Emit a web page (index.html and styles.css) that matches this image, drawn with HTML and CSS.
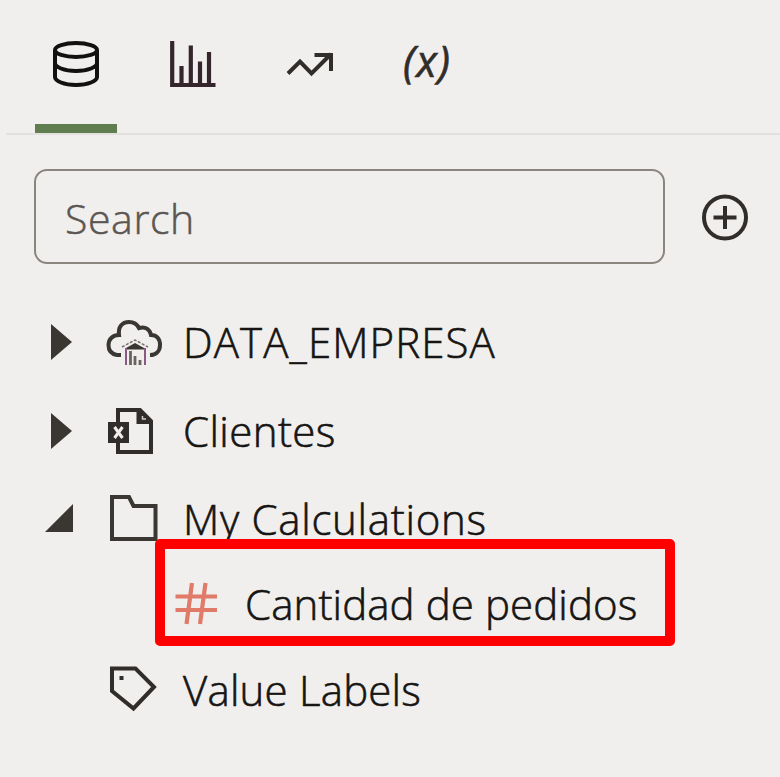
FILE: index.html
```html
<!DOCTYPE html>
<html lang="en">
<head>
<meta charset="utf-8">
<title>Data panel</title>
<link rel="stylesheet" href="styles.css">
</head>
<body>
<nav class="tabs">
  <button class="tab active" aria-label="Data"><svg class="icon" viewBox="0 0 48 48"><g fill="none" stroke="#111" stroke-width="4"><ellipse cx="24" cy="10" rx="21" ry="7"/><path d="M3 10V37C3 41 12 45 24 45S45 41 45 37V10M3 23C3 27 12 31 24 31S45 27 45 23"/></g></svg></button>
  <button class="tab" aria-label="Visualizations"><svg class="icon" viewBox="0 0 48 48"><path d="M3.2 1V45H46.5M12.5 26V44M21.8 5.500V44M31 21.500V44M40 12V44" fill="none" stroke="#35262e" stroke-width="4.2"/></svg></button>
  <button class="tab" aria-label="Analytics"><svg class="icon" viewBox="0 0 48 48"><path d="M2 33.500 14 21.500 25.500 33.500 45 14M28.500 15H45V31" fill="none" stroke="#312d2a" stroke-width="4"/></svg></button>
  <button class="tab parameter" aria-label="Parameters">(x)</button>
</nav>
<main>
  <div class="toolbar">
    <input class="search" type="text" placeholder="Search">
    <button class="add" aria-label="Add"><svg class="icon" viewBox="0 0 48 48"><g fill="none" stroke="#312d2a" stroke-width="4"><circle cx="24" cy="24.500" r="21"/><path d="M12.500 24.500H35.500M24 13V36"/></g></svg></button>
  </div>
  <ul class="tree">
    <li class="row first">
      <svg class="arrow" viewBox="0 0 30 40"><path d="M6 2 27 20 6 38Z"/></svg>
      <svg class="item-icon" viewBox="0 0 60 50"><path d="M17 38H13C7 37 4.500 33 4.500 28 4.500 22 9 18 15 18 14 10 18 5 25 5 29 5 33 7 35 11 42 9 46 13 47 18 53 18 56 22 56 28S52 38 46 38" fill="none" stroke="#3a3631" stroke-width="4"/><path d="M18 30 31 23 44 30" fill="none" stroke="#77716c" stroke-width="1.500" stroke-dasharray="3 1.500"/><path d="M22 31 31 26 40 31V32.500H22Z" fill="#3a3631"/><path d="M22 31V48M41 31V48" fill="none" stroke="#8a5a84" stroke-width="2"/><path d="M26.500 34V48M31 39V48M36 43V48" fill="none" stroke="#6a6460" stroke-width="2.800"/></svg>
      <span class="label data">DATA_EMPRESA</span>
    </li>
    <li class="row second">
      <svg class="arrow" viewBox="0 0 30 40"><path d="M6 2 27 20 6 38Z"/></svg>
      <svg class="item-icon" viewBox="0 0 60 50"><path d="M14 17V4H36L47 15V46H14V36M34.500 4V16H47" fill="none" stroke="#312d2a" stroke-width="4"/><path d="M35 5 46 16H35Z" fill="#312d2a"/><path d="M38.500 10V13H42" fill="none" stroke="#d0cecb" stroke-width="1.500"/><path d="M4 16H25V37H4Z" fill="#312d2a"/><path d="M10.500 21 18.500 32M18.500 21 10.500 32" stroke="#f1efed" stroke-width="3"/></svg>
      <span class="label clients">Clientes</span>
    </li>
    <li class="row third">
      <svg class="arrow" viewBox="0 0 30 40"><path d="M0 33H28V5Z"/></svg>
      <svg class="item-icon" viewBox="0 0 60 50"><path d="M8 3H25L29.500 12H51.500V45H8Z" fill="none" stroke="#3a3631" stroke-width="4"/></svg>
      <span class="label calculations">My Calculations</span>
    </li>
    <li class="row child">
      <svg class="hash" viewBox="0 0 44 44"><path d="M18 1 12.500 42M31.500 1 26 42M1.500 14.500H43M1.500 28H43" fill="none" stroke="#df7b68" stroke-width="4.2"/></svg>
      <span class="label orders">Cantidad de pedidos</span>
      <span class="highlight"></span>
    </li>
    <li class="row last">
      <span class="arrow"></span>
      <svg class="item-icon" viewBox="0 0 60 50"><path d="M8 3.500H31.500L50 22 29.500 43.500 8 26Z" fill="none" stroke="#312d2a" stroke-width="4"/><path d="M15.500 11H19.500V15H15.500Z" fill="#312d2a"/></svg>
      <span class="label values">Value Labels</span>
    </li>
  </ul>
</main>
</body>
</html>
```
FILE: styles.css
```css
* { box-sizing: border-box; }
body {
  margin: 0;
  height: 777px;
  overflow: hidden;
  background: #f1efed;
  color: #161513;
  font-family: "Open Sans", "Noto Sans", sans-serif;
}
button { padding: 0; border: 0; background: none; color: inherit; font: inherit; }
svg { display: block; flex: none; }
.tabs {
  display: flex;
  gap: 35px;
  height: 135px;
  margin-left: 6px;
  padding-left: 29px;
  border-bottom: 2px solid #e3e1df;
}
.tab {
  width: 82px;
  height: 133px;
  display: flex;
  justify-content: center;
  align-items: flex-start;
  padding-top: 40px;
}
.active { border-bottom: 9px solid #5f7d4f; }
.icon { width: 48px; height: 48px; }
.parameter {
  padding-top: 32px;
  font-size: 43px;
  line-height: 58px;
  font-style: italic;
  letter-spacing: 1px;
  color: #312d2a;
  -webkit-text-stroke: 0.6px #312d2a;
}
.toolbar { display: flex; align-items: center; padding: 34px 31px 0 34px; }
.search {
  width: 631px;
  height: 95px;
  border: 2px solid #8b8580;
  border-radius: 13px;
  padding: 2px 29px 0 29px;
  background: transparent;
  outline: none;
  font: 300 41px "Open Sans", "Noto Sans", sans-serif;
  letter-spacing: 0.6px;
}
.search::placeholder { color: #5b5652; opacity: 1; -webkit-text-stroke: 0.5px #5b5652; }
.add { margin-left: 36px; }
.tree { list-style: none; margin: 0; padding: 33px 0 0 45px; }
.row { display: flex; align-items: center; height: 88px; }
.first { height: 89px; }
.second { height: 89px; }
.last { height: 92px; }
.arrow { width: 30px; height: 40px; fill: #3a3631; flex: none; }
.item-icon { width: 60px; height: 50px; margin-left: 29px; }
.label {
  margin-left: 19px;
  font-size: 42px;
  font-weight: 300;
  line-height: 58px;
  white-space: nowrap;
  -webkit-text-stroke: 0.6px #161513;
}
.data { letter-spacing: 1.1px; }
.clients { letter-spacing: 0.4px; }
.calculations { letter-spacing: 0.7px; }
.values { letter-spacing: 0.2px; }
.child { position: relative; height: 81px; padding-left: 129px; }
.hash { width: 44px; height: 44px; }
.orders { margin-left: 27px; letter-spacing: 0.1px; }
.highlight {
  position: absolute;
  left: 110px;
  top: -24px;
  width: 520px;
  height: 107px;
  border: 10px solid #f00;
  border-radius: 5px;
}
```
